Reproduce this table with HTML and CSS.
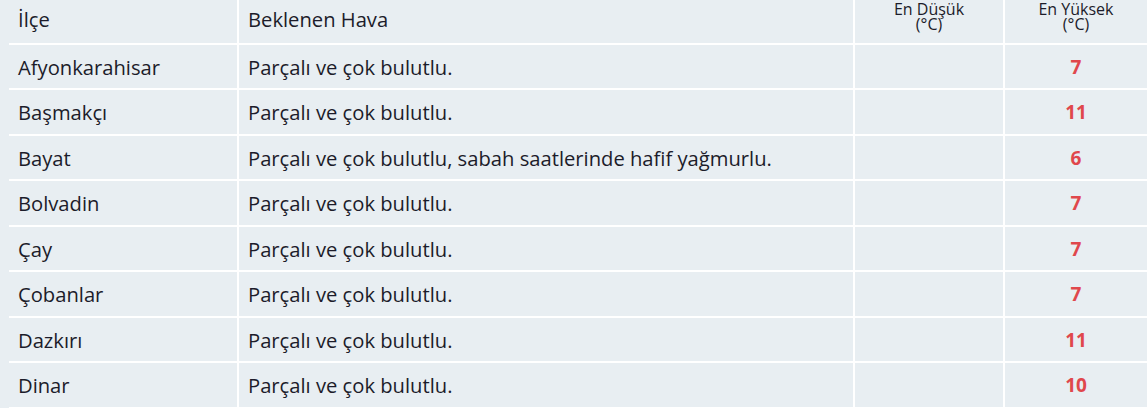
FILE: index.html
```html
<!DOCTYPE html>
<html lang="tr">
<head>
<meta charset="utf-8">
<title>Hava Durumu</title>
<link rel="stylesheet" href="styles.css">
</head>
<body>
<table class="wx">
  <thead>
    <tr>
      <th class="c-name">İlçe</th>
      <th class="c-desc">Beklenen Hava</th>
      <th class="c-min"><span class="small">En Düşük<br>(°C)</span></th>
      <th class="c-max"><span class="small">En Yüksek<br>(°C)</span></th>
    </tr>
  </thead>
  <tbody>
    <tr><td>Afyonkarahisar</td><td>Parçalı ve çok bulutlu.</td><td></td><td class="hi">7</td></tr>
    <tr><td>Başmakçı</td><td>Parçalı ve çok bulutlu.</td><td></td><td class="hi">11</td></tr>
    <tr><td>Bayat</td><td>Parçalı ve çok bulutlu, sabah saatlerinde hafif yağmurlu.</td><td></td><td class="hi">6</td></tr>
    <tr><td>Bolvadin</td><td>Parçalı ve çok bulutlu.</td><td></td><td class="hi">7</td></tr>
    <tr><td>Çay</td><td>Parçalı ve çok bulutlu.</td><td></td><td class="hi">7</td></tr>
    <tr><td>Çobanlar</td><td>Parçalı ve çok bulutlu.</td><td></td><td class="hi">7</td></tr>
    <tr><td>Dazkırı</td><td>Parçalı ve çok bulutlu.</td><td></td><td class="hi">11</td></tr>
    <tr><td>Dinar</td><td>Parçalı ve çok bulutlu.</td><td></td><td class="hi">10</td></tr>
  </tbody>
</table>
</body>
</html>
```
FILE: styles.css
```css
html, body {
  margin: 0;
  padding: 0;
  background: #e8eef2;
}
body {
  font-family: "Open Sans", "Noto Sans", sans-serif;
  color: #1c1c2a;
  padding-left: 9px;
}
.wx {
  border-collapse: collapse;
  width: 1138px;
  table-layout: fixed;
}
.wx th, .wx td {
  border-bottom: 2px solid #ffffff;
  border-left: 2px solid #ffffff;
  padding: 0 0 0 9px;
  text-align: left;
  font-weight: normal;
  font-size: 20.2px;
  vertical-align: middle;
}
.wx th:first-child, .wx td:first-child {
  border-left: none;
}
.wx th {
  height: 38px;
  vertical-align: top;
  padding-top: 5px;
}
.wx tbody tr:nth-child(odd) td {
  height: 43px;
}
.wx tbody tr:nth-child(even) td {
  height: 44px;
}
.c-name { width: 219px; }
.c-desc { width: 605px; }
.c-min { width: 148px; }
.c-max { width: auto; }
.wx th.c-min, .wx th.c-max {
  text-align: center;
  vertical-align: top;
  padding: 0;
  height: 43px;
}
.small {
  display: block;
  font-size: 16px;
  line-height: 15px;
  padding-top: 2px;
}
.wx td.hi {
  text-align: center;
  padding: 0;
  color: #e0474c;
  font-weight: bold;
  font-size: 19px;
}
```
